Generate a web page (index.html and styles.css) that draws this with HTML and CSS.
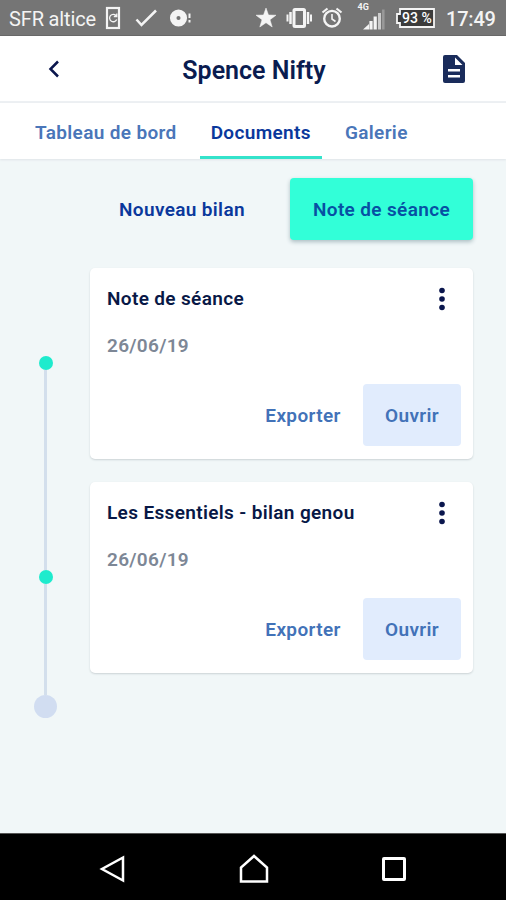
FILE: index.html
```html
<!DOCTYPE html>
<html lang="fr">
<head>
<meta charset="utf-8">
<meta name="viewport" content="width=device-width">
<title>Spence Nifty</title>
<link rel="stylesheet" href="styles.css">
</head>
<body>
<div class="statusbar">
  <span class="carrier">SFR altice</span>
  <svg class="status-left" width="90" height="35" viewBox="104 0 90 35" fill="none" stroke="#f4f4f4">
    <rect x="107" y="8" width="12" height="20" stroke-width="2.200"/>
    <path d="M116 15.5a3.7 3.7 0 1 0 .7 4M116.8 13.5v3h-3" stroke-width="1.3"/>
    <path d="M136.500 19.500l5 5.500 14.500-14.500" stroke-width="2.500"/>
    <circle cx="178.500" cy="18" r="5.300" stroke-width="6.500"/>
    <path d="M189.500 13.500v4.500M189.500 20v2.500" stroke-width="2"/>
  </svg>
  <svg class="status-right" width="188" height="35" viewBox="253 0 188 35" fill="none" stroke="#f4f4f4">
    <path d="M266 8l2.500 7 7.500.2-6 4.500 2.200 7.300-6.200-4.300-6.200 4.300 2.200-7.300-6-4.500 7.500-.2z" fill="#f4f4f4" stroke="#f4f4f4" stroke-width=".5"/>
    <rect x="294" y="9.500" width="10.500" height="17" rx="1" stroke-width="3"/>
    <path d="M290.500 12v12M308 12v12" stroke-width="2.500"/><path d="M287.500 14.500v7M311 14.500v7" stroke-width="2"/>
    <circle cx="332" cy="18.700" r="7.800" stroke-width="2.400"/>
    <path d="M332 14v5l3.500 2.500" stroke-width="1.600"/><path d="M322.500 12.500l5-4M336.500 8.500l5 4" stroke-width="2.200"/>
    <path d="M363 29.500l6-5.500v5.500z" fill="#f4f4f4" stroke="none"/>
    <path d="M371 29.500v-8.500M375.200 29.500v-13" stroke-width="3.200"/><path d="M379.500 29.500v-16.500" stroke="#ccc" stroke-width="3"/><path d="M383.300 29.500v-20" stroke="#999" stroke-width="2.500"/>
    <text x="357.500" y="10" class="network">4G</text>
    <path d="M400 9h34v18h-34v-4h-3v-9h3z" fill="#3b3b3b" stroke-width="1.800"/>
    <text x="402" y="23" class="battery">93 %</text>
  </svg>
  <span class="clock">17:49</span>
</div>
<header class="header">
  <svg width="24" height="24" viewBox="0 0 24 24" fill="none" stroke="#0a164d" stroke-width="2.500"><path d="M16 4.500L8.500 12l7.500 7.500"/></svg>
  <h1 class="title">Spence Nifty</h1>
  <svg width="24" height="28" viewBox="0 0 24 28"><path fill="#1a2c5b" d="M3 0h12l8 8v18q0 2-2 2H3q-2 0-2-2V2q0-2 2-2z"/><path fill="#fff" d="M13 2.500V10h7.500zM6 14h12v2.500H6zM6 20h12v2.500H6z"/></svg>
</header>
<nav class="tabs">
  <span class="tab">Tableau de bord</span>
  <span class="tab tab-active">Documents</span>
  <span class="tab">Galerie</span>
</nav>
<main class="content">
  <div class="actions">
    <button class="btn new">Nouveau bilan</button>
    <button class="btn primary">Note de séance</button>
  </div>
  <div class="feed">
    <div class="timeline">
      <span class="dot"></span>
      <span class="line"></span>
      <span class="dot"></span>
      <span class="line line-last"></span>
      <span class="end"></span>
    </div>
    <div class="cards">
      <article class="card">
        <div class="card-head"><h2 class="card-title">Note de séance</h2><svg width="8" height="24" viewBox="0 0 8 24" fill="#0a164d"><circle cx="4" cy="3.500" r="2.800"/><circle cx="4" cy="12" r="2.800"/><circle cx="4" cy="20.500" r="2.800"/></svg></div>
        <p class="date">26/06/19</p>
        <div class="card-actions"><button class="btn export">Exporter</button><button class="btn open">Ouvrir</button></div>
      </article>
      <article class="card">
        <div class="card-head"><h2 class="card-title">Les Essentiels - bilan genou</h2><svg width="8" height="24" viewBox="0 0 8 24" fill="#0a164d"><circle cx="4" cy="3.500" r="2.800"/><circle cx="4" cy="12" r="2.800"/><circle cx="4" cy="20.500" r="2.800"/></svg></div>
        <p class="date">26/06/19</p>
        <div class="card-actions"><button class="btn export">Exporter</button><button class="btn open">Ouvrir</button></div>
      </article>
    </div>
  </div>
</main>
<footer class="navbar">
  <svg width="28" height="30" viewBox="0 0 28 30" fill="none" stroke="#fff" stroke-width="2.500"><path d="M24 3.500v23L3 15z"/></svg>
  <svg width="30" height="30" viewBox="0 0 30 30" fill="none" stroke="#fff" stroke-width="2.500"><path d="M2 27.500V13.500L15 2l13 11.500v14z"/></svg>
  <svg width="26" height="30" viewBox="0 0 26 30" fill="none" stroke="#fff" stroke-width="3"><rect x="2.500" y="4.500" width="21" height="21" rx=".5"/></svg>
</footer>
</body>
</html>
```
FILE: styles.css
```css
* { box-sizing: border-box; }
body { margin: 0; height: 900px; display: flex; flex-direction: column; font-family: Roboto, sans-serif; background: #f1f7f8; overflow: hidden; white-space: nowrap; }
h1, h2, p { margin: 0; }
svg { display: block; flex: none; }
.statusbar { height: 36px; flex: none; display: flex; align-items: center; background: #757575; border-bottom: 1px solid #686868; color: #f4f4f4; font-size: 20px; }
.carrier { width: 104px; padding: 2px 0 0 9px; letter-spacing: -.15px; }
.status-right { margin-left: 59px; }
.clock { padding: 2px 0 0 5px; font-weight: 500; letter-spacing: -.2px; }
.network { font: 700 9px Roboto, sans-serif; fill: #f4f4f4; stroke: none; }
.battery { font: 500 14px Roboto, sans-serif; fill: #fff; stroke: none; }
.header { height: 67px; flex: none; display: flex; align-items: center; justify-content: space-between; padding: 0 40px 0 42px; background: #fff; border-bottom: 2px solid #edf0f3; }
.title { font-size: 25px; font-weight: 600; line-height: 30px; color: #0a1c50; padding-top: 5px; }
.tabs { height: 56px; flex: none; display: flex; padding-left: 24px; background: #fff; box-shadow: 0 1px 2px #dfe4e8; z-index: 1; }
.tab { padding: 0 11px; line-height: 59px; font-size: 19px; font-weight: 600; letter-spacing: .35px; color: #4a76b9; }
.tab + .tab { margin-left: 12px; }
.tab-active { color: #0a389c; border-bottom: 3px solid #34e3cb; }
.content { flex: 1; padding: 19px 33px 0; }
.actions { display: flex; justify-content: flex-end; }
.btn { height: 62px; border: 0; border-radius: 4px; padding: 1px 0 0; font: 600 19px Roboto, sans-serif; letter-spacing: .35px; background: none; color: #4272b8; }
.new { width: 172px; margin-right: 22px; color: #0a389c; }
.primary { width: 183px; background: #32ffd8; color: #0750a3; box-shadow: 0 2px 4px #acbec3; }
.feed { display: flex; justify-content: space-between; margin-top: 28px; }
.timeline { width: 25px; display: flex; flex-direction: column; align-items: center; padding-top: 88px; }
.dot { width: 14px; height: 14px; border-radius: 50%; background: #1eebcd; }
.line { width: 3px; height: 200px; background: #d3dfec; }
.line-last { height: 111px; }
.end { width: 23px; height: 23px; border-radius: 50%; background: #d1ddf1; }
.cards { width: 383px; display: flex; flex-direction: column; gap: 23px; }
.card { height: 191px; padding: 19px 12px 12px 17px; background: #fff; border-radius: 5px; box-shadow: 0 1px 2px #cbd2d5; }
.card-head { display: flex; justify-content: space-between; align-items: center; height: 24px; padding-right: 15px; }
.card-title { font-size: 19px; font-weight: 600; letter-spacing: .35px; line-height: 24px; color: #081846; }
.date { margin-top: 23px; line-height: 24px; font-size: 19px; font-weight: 600; letter-spacing: .3px; color: #7d8796; }
.card-actions { display: flex; justify-content: flex-end; margin-top: 26px; }
.export { width: 98px; margin-right: 11px; }
.open { width: 98px; background: #e1ecfd; }
.navbar { height: 67px; flex: none; display: flex; justify-content: space-between; align-items: center; padding: 4px 99px 0 99px; background: #000; border-top: 1px solid #555; }
```
